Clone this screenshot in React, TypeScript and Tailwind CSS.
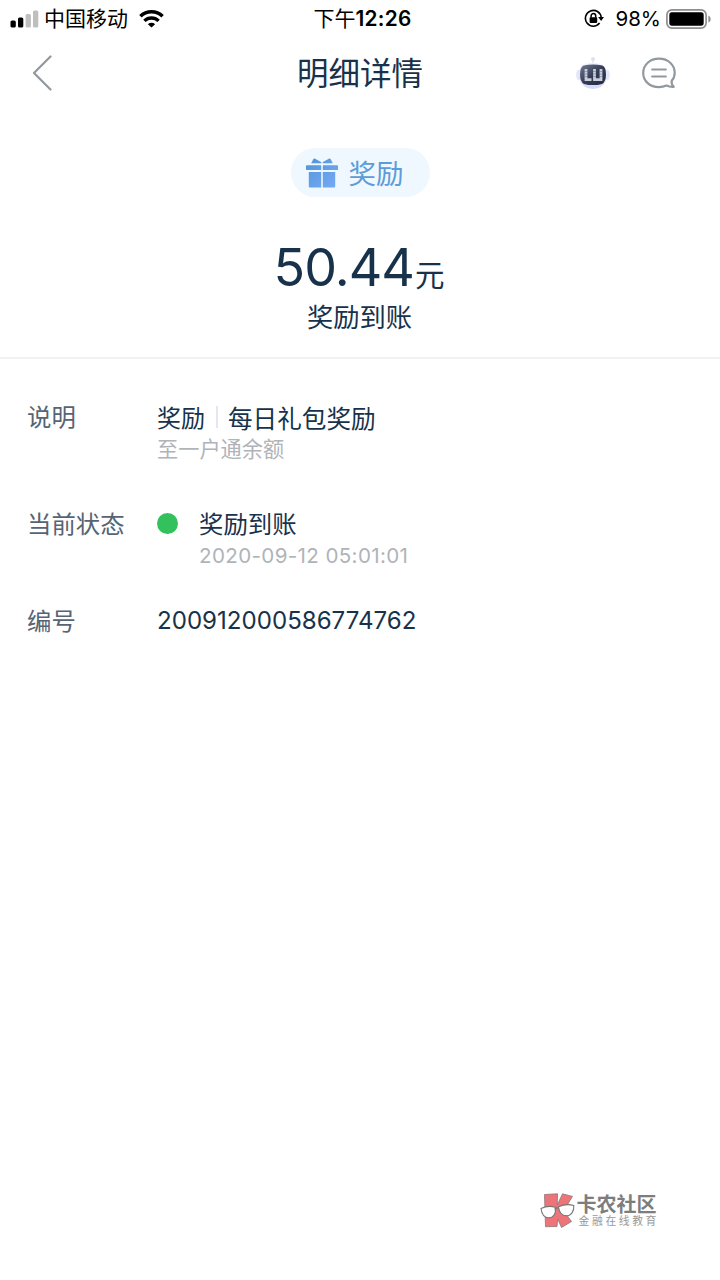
import React from "react";

function SignalBars() {
  return (
    <svg width="29" height="18" viewBox="0 0 29 18" className="shrink-0">
      <rect x="0.5" y="10.5" width="5.3" height="7" rx="1.6" fill="#000" />
      <rect x="8" y="7.5" width="5.3" height="10" rx="1.6" fill="#000" />
      <rect x="15.6" y="4" width="5.3" height="13.5" rx="1.6" fill="#bfbfbf" />
      <rect x="23" y="0.5" width="5.3" height="17" rx="1.6" fill="#bfbfbf" />
    </svg>
  );
}

function Wifi() {
  return (
    <svg width="25" height="18" viewBox="0 0 25 18" className="shrink-0">
      <g fill="none" stroke="#000" strokeWidth="3.4">
        <path d="M1.4 6.3a15.8 15.8 0 0 1 22.2 0" />
        <path d="M5.4 10.9a10.2 10.2 0 0 1 14.2 0" />
      </g>
      <path d="M12.5 17.6l-3.6-3.4a5.2 5.2 0 0 1 7.2 0z" fill="#000" />
    </svg>
  );
}

function RotationLock() {
  return (
    <svg width="20" height="19" viewBox="0 0 20 19" className="shrink-0">
      <path d="M15.600 14.100A7.900 7.900 0 1 1 17.200 8.500" fill="none" stroke="#000" strokeWidth="1.600" />
      <path d="M14.200 8h5.800l-2.900 4z" fill="#000" />
      <rect x="5.600" y="8.300" width="7.600" height="5.600" rx="0.800" fill="#000" />
      <path d="M7.100 8.800V6.900a2.300 2.300 0 0 1 4.600 0v1.900" fill="none" stroke="#000" strokeWidth="1.500" />
    </svg>
  );
}

function Battery() {
  return (
    <svg width="46" height="20" viewBox="0 0 46 20" className="shrink-0">
      <rect x="0.9" y="0.9" width="39.2" height="18.2" rx="5" fill="none" stroke="#8e8e8e" strokeWidth="1.7" />
      <rect x="3.3" y="3.3" width="34.4" height="13.4" rx="2.6" fill="#000" />
      <path d="M42.4 6.4c3 1.3 3 5.9 0 7.2z" fill="#8e8e8e" />
    </svg>
  );
}

function Robot() {
  return (
    <svg width="36" height="34" viewBox="0 0 36 34" className="shrink-0">
      <defs>
        <linearGradient id="head" x1="0" y1="0" x2="0" y2="1">
          <stop offset="0" stopColor="#f0f1fb" />
          <stop offset="1" stopColor="#d3dbf4" />
        </linearGradient>
        <linearGradient id="face" x1="0" y1="0" x2="1" y2="1">
          <stop offset="0" stopColor="#737b95" />
          <stop offset="0.5" stopColor="#363d57" />
          <stop offset="1" stopColor="#232941" />
        </linearGradient>
      </defs>
      <path d="M18 3v6" stroke="#e4e5ee" strokeWidth="1.4" />
      <circle cx="18" cy="3" r="2" fill="#dfe0e9" />
      <ellipse cx="3.700" cy="19" rx="2.500" ry="5.200" fill="#e2e7f8" />
      <ellipse cx="32.300" cy="19" rx="2.500" ry="5.200" fill="#e2e7f8" />
      <path d="M18 6.700c10 0 14 5 14 12.400S27 33 18 33 4 26.500 4 19.100 8 6.700 18 6.700z" fill="url(#head)" />
      <path d="M8.500 9.600Q18 7.600 27.500 9.600Q31 11.200 31 18.500T27 27.900Q18 30.300 9 27.900Q5 25.800 5 18.500T8.500 9.600z" fill="url(#face)" />
      <path d="M11 13v10.700h5.500M19.500 13v10.700h6.500V13" fill="none" stroke="#c9cdda" strokeWidth="2.800" />
      <path d="M9.500 15.500h3.200M9.500 18h3.200M9.500 20.500h3.200M18 15.500h3.200M18 18h3.200M18 20.500h3.200M24.500 15.500h3.200M24.500 18h3.200M24.500 20.500h3.200" stroke="#697087" strokeWidth="0.500" />
    </svg>
  );
}

function Chat() {
  return (
    <svg width="34" height="32" viewBox="0 0 34 32" className="shrink-0" fill="none" stroke="#91999f" strokeWidth="2.200" strokeLinecap="round" strokeLinejoin="round">
      <path d="M29.700 23.800C31.700 21.500 32.700 18.800 32.700 15.900 32.700 7.700 26 1.700 17 1.700S1.200 7.700 1.200 15.900 8 30.100 17 30.100c2.700 0 5.200-.500 7.500-1.500 2.200 1.100 4.500 1.500 7.200 1.300-1.800-1.800-2.400-3.800-2-6.100z" />
      <path d="M10.200 12.500h13.600M10.200 19.500h13.600" />
    </svg>
  );
}

function Gift() {
  return (
    <svg width="32" height="30" viewBox="0 0 32 30" className="shrink-0">
      <defs>
        <linearGradient id="gift" gradientUnits="userSpaceOnUse" x1="4" y1="0" x2="28" y2="30">
          <stop offset="0" stopColor="#5395dc" />
          <stop offset="1" stopColor="#74aaf3" />
        </linearGradient>
      </defs>
      <g fill="url(#gift)">
        <path d="M5.200 5.300L7.400.900Q7.900.200 8.700.600L15.500 4.300 15 5.300z" />
        <path d="M26.800 5.300L24.600.900Q24.100.200 23.300.600L16.500 4.300 17 5.300z" />
        <rect x="0" y="7.300" width="15.200" height="4.700" rx="0.600" />
        <rect x="16.800" y="7.300" width="15.200" height="4.700" rx="0.600" />
        <path d="M2.800 14h12.400v15.500H3.800q-1 0-1-1z" />
        <path d="M16.800 14h12.400v14.500q0 1-1 1H16.800z" />
      </g>
    </svg>
  );
}

function CommunityLogo() {
  return (
    <svg width="35" height="36" viewBox="0 0 35 36" className="shrink-0">
      <g fill="#ed7479" stroke="#8b7778" strokeWidth="0.800">
        <path d="M4.500 1.500L17.500.800 17.300 12 22.500.800 32.500 3.400 23.500 18 31.500 28.500 21.500 34.500 17.700 26 17 33.500 5.500 33.700z" />
      </g>
      <g fill="#fff" stroke="#777" strokeWidth="1.100">
        <path d="M1 15.500Q8 12 15.300 14.300C16.300 21 13 24.800 8.800 24.800S1.800 22 1 15.500z" />
        <path d="M18.500 13.800Q26 10.300 33.800 12.500C34.300 18.500 31 22.800 26.700 22.800S19 19.500 18.500 13.800z" />
        <path d="M14.800 16q2-2 4-.500" fill="none" />
      </g>
    </svg>
  );
}

export default function App() {
  return (
    <div className="flex h-[1280px] w-[720px] flex-col overflow-hidden bg-white font-['Inter','Noto_Sans_CJK_SC',sans-serif] text-[#17324a]">
      <div className="grid h-9 grid-cols-[1fr_auto_1fr] items-center pl-[10px] pr-[8px] text-black">
        <div className="flex h-9 items-center">
          <SignalBars />
          <span className="ml-[5px] pt-px text-[21px] leading-9">中国移动</span>
          <span className="ml-[11px]"><Wifi /></span>
        </div>
        <div className="pl-[3px] pt-px text-[20.800px] font-semibold leading-9 tracking-[0.300px]">
          <span className="text-[21px] font-normal tracking-normal">下午</span>12:26
        </div>
        <div className="flex h-9 items-center justify-end">
          <RotationLock />
          <span className="ml-[11px] mr-[5px] pt-px text-[20.500px] leading-9">98%</span>
          <Battery />
        </div>
      </div>

      <header className="grid h-[76px] grid-cols-[1fr_auto_1fr] items-center px-11 pb-0.5">
        <svg width="20" height="36" viewBox="0 0 20 36" className="-ml-3" fill="none" stroke="#92989e" strokeWidth="2.200" strokeLinecap="round" strokeLinejoin="round">
          <path d="M18.500 1.500L2 18l16.500 16.500" />
        </svg>
        <h1 className="pt-0.5 text-[31.500px] leading-[48px]">明细详情</h1>
        <div className="flex items-center justify-end gap-[31px]">
          <Robot />
          <Chat />
        </div>
      </header>

      <section className="flex h-[247px] flex-col items-center border-b-2 border-[#f1f1f2] pt-9">
        <div className="flex h-[49px] w-[139px] items-center rounded-full bg-[#eff7ff] pl-[15px] text-[#5d9bd9]">
          <Gift />
          <span className="ml-[11px] pt-[3px] text-[27.500px] leading-[46px]">奖励</span>
        </div>
        <div className="mt-[38px] flex h-[65px] items-baseline whitespace-nowrap pr-0.5 leading-[65px]">
          <span className="text-[52px] tracking-[-1px]">50.44</span>
          <span className="ml-px text-[29.500px]">元</span>
        </div>
        <div className="pr-px text-[26.300px] leading-9">奖励到账</div>
      </section>

      <dl className="grid grid-cols-[130px_1fr] pl-[27px] pt-[40px] text-[24.400px] leading-[38px]">
        <dt className="-mt-px text-[#566473]">说明</dt>
        <dd className="h-[106px]">
          <div className="flex items-center">
            <span className="pt-px text-[24px]">奖励</span>
            <span className="ml-[11px] mr-[10px] mb-1 h-[22px] w-[2px] bg-[#e3e8ee]" />
            <span className="pt-px text-[24.600px]">每日礼包奖励</span>
          </div>
          <div className="-mt-px text-[21.200px] leading-6 text-[#afb4b9]">至一户通余额</div>
        </dd>
        <dt className="text-[#566473]">当前状态</dt>
        <dd className="flex h-[97px] items-start">
          <span className="mt-2 size-[21px] rounded-full bg-[#33c15e]" />
          <div className="ml-[21px]">
            <div>奖励到账</div>
            <div className="pt-px text-[20.600px] leading-6 tracking-[0.350px] text-[#afb4b9]">2020-09-12 05:01:01</div>
          </div>
        </dd>
        <dt className="text-[#566473]">编号</dt>
        <dd className="text-[24.100px]">200912000586774762</dd>
      </dl>

      <footer className="mb-[51px] mr-[61px] mt-auto flex items-center justify-end">
        <CommunityLogo />
        <div className="ml-[2px] text-[#7d7d7d]">
          <div className="text-[20px] font-bold leading-[22px]">卡农社区</div>
          <div className="pl-0.5 text-[10.800px] leading-3 tracking-[2.600px] text-[#999]">金融在线教育</div>
        </div>
      </footer>
    </div>
  );
}
